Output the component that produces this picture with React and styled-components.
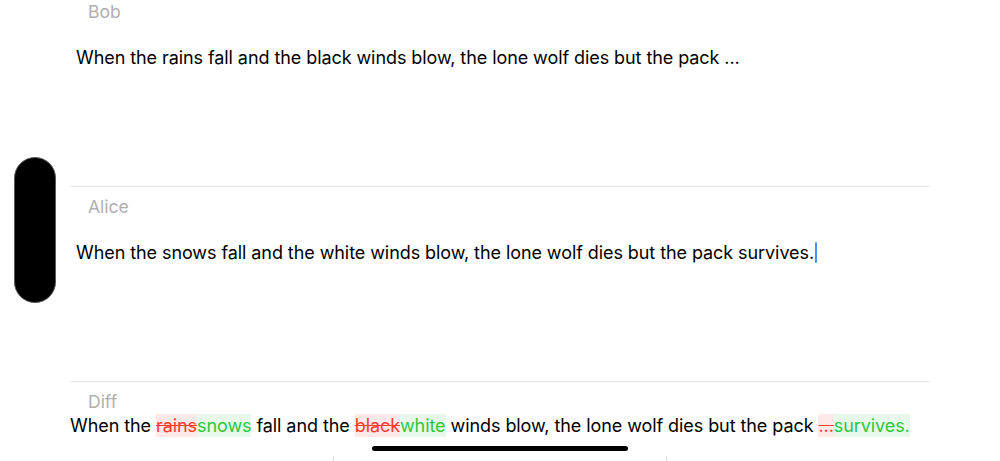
import React from 'react';
import styled, { createGlobalStyle } from 'styled-components';

const GlobalStyle = createGlobalStyle`
  html, body {
    margin: 0;
    padding: 0;
    background: #fff;
    overflow: hidden;
  }
  body {
    font-family: Inter, "Noto Sans", "Liberation Sans", sans-serif;
    color: #000;
  }
`;

const Screen = styled.div`
  position: relative;
  width: 1000px;
  height: 461px;
  overflow: hidden;
  background: #fff;
`;

const Column = styled.div`
  width: 860px;
  margin: -9px 0 0 70px;
  display: flex;
  flex-direction: column;
`;

const Section = styled.section`
  border-top: 1px solid #e6e6e6;
  display: flex;
  flex-direction: column;
`;

const Label = styled.div`
  padding: 8px 0 ${(p) => (p.compact ? '0' : '8px')} 18px;
  font-size: 17.5px;
  line-height: 24px;
  color: #b0b0b0;
`;

const Editor = styled.div`
  height: 154px;
  box-sizing: border-box;
  padding: 14px 0 0 6px;
  font-size: 18px;
  line-height: 24px;
  letter-spacing: -0.075px;
`;

const Caret = styled.span`
  display: inline-block;
  width: 2px;
  height: 21px;
  margin-left: 1px;
  vertical-align: -4px;
  background: #4b92f5;
  border-radius: 1px;
`;

const DiffLine = styled.div`
  font-size: 18px;
  line-height: 24px;
  letter-spacing: -0.075px;
  white-space: nowrap;
`;

const Removed = styled.span`
  color: #ff3b30;
  background: #ffe8e8;
  text-decoration: line-through;
  padding: 1px 0;
`;

const Added = styled.span`
  color: #2bc840;
  background: #e8f8eb;
  padding: 1px 0;
`;

const SideHandle = styled.div`
  position: absolute;
  left: 14px;
  top: 157px;
  width: 42px;
  height: 146px;
  box-sizing: border-box;
  background: #000;
  border: 1px solid #5a5a5a;
  border-radius: 21px;
`;

const HomeIndicator = styled.div`
  position: absolute;
  left: 372px;
  top: 446px;
  width: 256px;
  height: 5px;
  background: #000;
  border-radius: 3px;
`;

const TabPeek = styled.div`
  position: absolute;
  left: 0;
  top: 457px;
  width: 1000px;
  height: 4px;
  display: grid;
  grid-template-columns: 333px 333px 334px;
`;

const TabCell = styled.div`
  border-left: ${(p) => (p.first ? 'none' : '1px solid #d8d8d8')};
`;

const diff = [
  ['When the '],
  ['rains', 'del'],
  ['snows', 'add'],
  [' fall and the '],
  ['black', 'del'],
  ['white', 'add'],
  [' winds blow, the lone wolf dies but the pack '],
  ['...', 'del'],
  ['survives.', 'add'],
];

const App = () => {
  return (
    <>
      <GlobalStyle />
      <Screen>
        <Column>
          <Section>
            <Label>Bob</Label>
            <Editor>
              When the rains fall and the black winds blow, the lone wolf dies but the pack ...
            </Editor>
          </Section>
          <Section>
            <Label>Alice</Label>
            <Editor>
              When the snows fall and the white winds blow, the lone wolf dies but the pack survives.
              <Caret />
            </Editor>
          </Section>
          <Section>
            <Label compact>Diff</Label>
            <DiffLine>
              {diff.map(([text, kind], i) => {
                if (kind === 'del') return <Removed key={i}>{text}</Removed>;
                if (kind === 'add') return <Added key={i}>{text}</Added>;
                return <span key={i}>{text}</span>;
              })}
            </DiffLine>
          </Section>
        </Column>
        <SideHandle />
        <TabPeek>
          <TabCell first />
          <TabCell />
          <TabCell />
        </TabPeek>
        <HomeIndicator />
      </Screen>
    </>
  );
};

export default App;
